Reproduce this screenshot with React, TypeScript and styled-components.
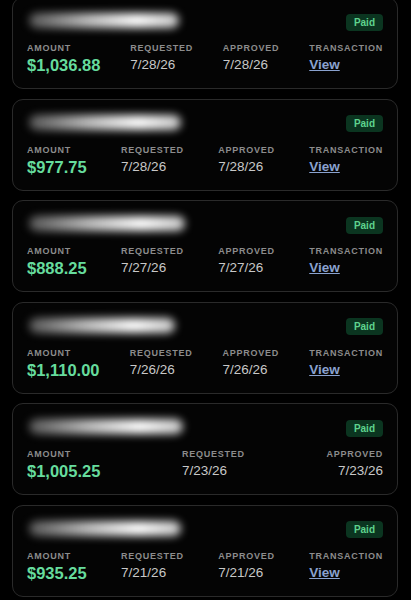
import React from 'react';
import styled, { createGlobalStyle } from 'styled-components';

const GlobalStyle = createGlobalStyle`
  html, body {
    margin: 0;
    padding: 0;
    background: #000;
    font-family: "Liberation Sans", Arial, sans-serif;
    overflow: hidden;
  }
`;

const List = styled.div`
  display: flex;
  flex-direction: column;
  gap: 9.5px;
  padding: 0 13px 0 12px;
  margin-top: -3px;
`;

const Card = styled.div`
  box-sizing: border-box;
  height: 92px;
  background: #040404;
  border: 1px solid #2a2a2a;
  border-radius: 11px;
  padding: 13px 14px 0 14px;
  display: flex;
  flex-direction: column;
`;

const Header = styled.div`
  display: flex;
  align-items: center;
  justify-content: space-between;
  height: 22px;
`;

const Redacted = styled.div<{ $width: number }>`
  width: ${p => p.$width}px;
  height: 15px;
  margin-left: 2px;
  margin-top: -3px;
  border-radius: 8px;
  background: linear-gradient(90deg, rgba(170, 170, 170, 0.5) 0%, rgba(225, 225, 225, 0.85) 40%, #fff 72%, rgba(235, 235, 235, 0.85) 100%);
  filter: blur(4.5px);
`;

const Badge = styled.span`
  display: inline-flex;
  align-items: center;
  height: 17px;
  padding: 0 8px;
  border-radius: 4px;
  background: #0b3520;
  color: #5fd38e;
  font-size: 10px;
  font-weight: 700;
`;

const Fields = styled.div`
  display: flex;
  justify-content: space-between;
  margin-top: 9px;
`;

const Field = styled.div<{ $right?: boolean }>`
  display: flex;
  flex-direction: column;
  align-items: ${p => (p.$right ? 'flex-end' : 'flex-start')};
`;

const Label = styled.span`
  font-size: 9px;
  line-height: 12px;
  font-weight: 700;
  letter-spacing: 0.75px;
  color: #8c8c8c;
`;

const Amount = styled.span`
  font-size: 16.5px;
  line-height: 21px;
  font-weight: 700;
  color: #66dc9d;
  margin-top: 1px;
`;

const DateText = styled.span`
  font-size: 13.5px;
  line-height: 19px;
  color: #c8c8c8;
  margin-top: 1px;
`;

const ViewLink = styled.a`
  font-size: 13.5px;
  line-height: 19px;
  font-weight: 700;
  color: #8aa2cf;
  text-decoration: underline;
  margin-top: 1px;
`;

type Payout = {
  amount: string;
  requested: string;
  approved: string;
  blur: number;
  hasTransaction: boolean;
};

const payouts: Payout[] = [
  { amount: '$1,036.88', requested: '7/28/26', approved: '7/28/26', blur: 150, hasTransaction: true },
  { amount: '$977.75', requested: '7/28/26', approved: '7/28/26', blur: 152, hasTransaction: true },
  { amount: '$888.25', requested: '7/27/26', approved: '7/27/26', blur: 156, hasTransaction: true },
  { amount: '$1,110.00', requested: '7/26/26', approved: '7/26/26', blur: 146, hasTransaction: true },
  { amount: '$1,005.25', requested: '7/23/26', approved: '7/23/26', blur: 154, hasTransaction: false },
  { amount: '$935.25', requested: '7/21/26', approved: '7/21/26', blur: 152, hasTransaction: true },
];

function PayoutCard(props: Payout) {
  return (
    <Card>
      <Header>
        <Redacted $width={props.blur} />
        <Badge>Paid</Badge>
      </Header>
      <Fields>
        <Field>
          <Label>AMOUNT</Label>
          <Amount>{props.amount}</Amount>
        </Field>
        <Field>
          <Label>REQUESTED</Label>
          <DateText>{props.requested}</DateText>
        </Field>
        <Field $right={!props.hasTransaction}>
          <Label>APPROVED</Label>
          <DateText>{props.approved}</DateText>
        </Field>
        {props.hasTransaction && (
          <Field>
            <Label>TRANSACTION</Label>
            <ViewLink href="#">View</ViewLink>
          </Field>
        )}
      </Fields>
    </Card>
  );
}

export default function App() {
  return (
    <>
      <GlobalStyle />
      <List>
        {payouts.map((p, i) => (
          <PayoutCard key={i} {...p} />
        ))}
      </List>
    </>
  );
}
